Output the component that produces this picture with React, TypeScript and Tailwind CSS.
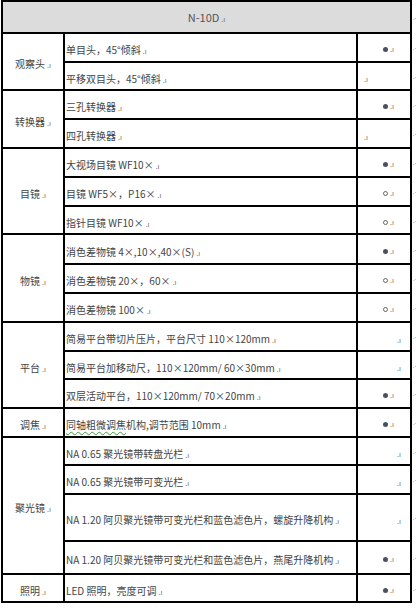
import React from 'react';

type Spec = 'full' | 'empty' | 'left' | 'right';

interface Row {
  group?: string;
  span?: number;
  text: React.ReactNode;
  spec: Spec;
  h: number;
}

// Word's end-of-cell marker
const Mark = () => <span className="ml-[2px] text-[7px] text-[#666]">.ı</span>;

const rows: Row[] = [
  { group: '观察头', span: 2, text: '单目头，45°倾斜', spec: 'full', h: 29 },
  { text: '平移双目头，45°倾斜', spec: 'left', h: 28 },
  { group: '转换器', span: 2, text: '三孔转换器', spec: 'full', h: 29 },
  { text: '四孔转换器', spec: 'left', h: 29 },
  { group: '目镜', span: 3, text: '大视场目镜 WF10×', spec: 'full', h: 29 },
  { text: '目镜 WF5×，P16×', spec: 'empty', h: 29 },
  { text: '指针目镜 WF10×', spec: 'empty', h: 28 },
  { group: '物镜', span: 3, text: '消色差物镜 4×,10×,40×(S)', spec: 'full', h: 30 },
  { text: '消色差物镜 20×，60×', spec: 'empty', h: 29 },
  { text: '消色差物镜 100×', spec: 'empty', h: 29 },
  { group: '平台', span: 3, text: '简易平台带切片压片，平台尺寸 110×120mm', spec: 'right', h: 29 },
  { text: '简易平台加移动尺，110×120mm/ 60×30mm', spec: 'right', h: 28 },
  { text: '双层活动平台，110×120mm/ 70×20mm', spec: 'full', h: 29 },
  {
    group: '调焦',
    span: 1,
    text: (
      <>
        <span className="underline decoration-wavy decoration-[#3c9a3c] underline-offset-2">同轴粗微调焦</span>
        机构,调节范围 10mm
      </>
    ),
    spec: 'full',
    h: 29,
  },
  { group: '聚光镜', span: 4, text: 'NA 0.65 聚光镜带转盘光栏', spec: 'right', h: 28 },
  { text: 'NA 0.65 聚光镜带可变光栏', spec: 'right', h: 29 },
  { text: 'NA 1.20 阿贝聚光镜带可变光栏和蓝色滤色片，螺旋升降机构', spec: 'right', h: 47 },
  { text: 'NA 1.20 阿贝聚光镜带可变光栏和蓝色滤色片，燕尾升降机构', spec: 'full', h: 33 },
  { group: '照明', span: 1, text: 'LED 照明，亮度可调', spec: 'full', h: 28 },
];

const SpecCell = ({ spec }: { spec: Spec }) => {
  if (spec === 'left') return <div className="pl-[4px]"><Mark /></div>;
  if (spec === 'right') return <div className="pl-[37px]"><Mark /></div>;
  return (
    <div className="pl-[25px] flex items-center">
      {spec === 'full' ? (
        <span className="inline-block w-[5px] h-[5px] rounded-full bg-[#4b5060]" />
      ) : (
        <span className="inline-block w-[5px] h-[5px] rounded-full border border-[#666]" />
      )}
      <Mark />
    </div>
  );
};

// end-of-row marker outside the table
const RowEnd = () => (
  <td className="border-0 p-0 pl-[1px] align-middle">
    <span className="block text-[5px] leading-none tracking-[-1px] text-[#777]">.·</span>
  </td>
);

export default function App() {
  return (
    <div className="w-[416px] h-[608px] bg-white overflow-hidden text-[#444]" style={{ fontFamily: '"Noto Sans CJK SC", "Liberation Sans", sans-serif' }}>
      <table className="table-fixed border-collapse ml-[1px] w-[413px] text-[10px] leading-none">
        <colgroup>
          <col className="w-[62px]" />
          <col className="w-[293px]" />
          <col className="w-[54px]" />
          <col className="w-[4px]" />
        </colgroup>
        <tbody>
          <tr className="h-[32px]">
            <td colSpan={3} className="border-2 border-black bg-[#dcdcdc] text-center text-[11px] text-[#555]">
              N-10D<Mark />
            </td>
            <RowEnd />
          </tr>
          {rows.map((r, i) => (
            <tr key={i} style={{ height: r.h }}>
              {r.group && (
                <td rowSpan={r.span} className="border-2 border-black text-center pt-[5px]">
                  {r.group}<Mark />
                </td>
              )}
              <td className="border-2 border-black pl-[1px] pt-[5px] whitespace-nowrap">
                {r.text}<Mark />
              </td>
              <td className="border-2 border-black pt-[4px]">
                <SpecCell spec={r.spec} />
              </td>
              <RowEnd />
            </tr>
          ))}
        </tbody>
      </table>
    </div>
  );
}
